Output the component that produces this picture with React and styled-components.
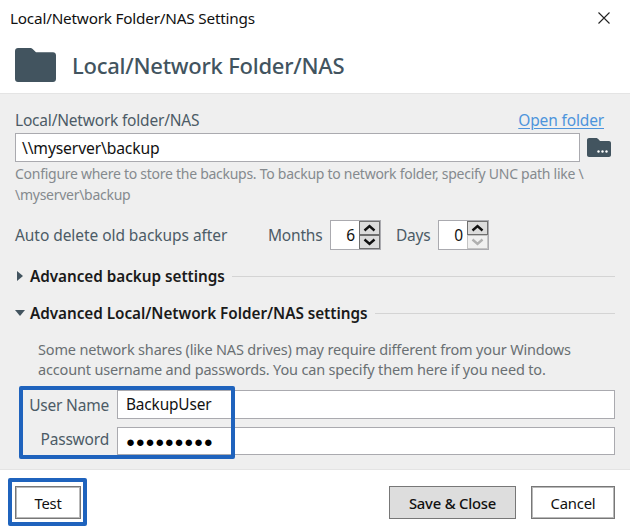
import React from "react";
import styled, { createGlobalStyle } from "styled-components";

const GlobalStyle = createGlobalStyle`
  html, body {
    margin: 0;
    padding: 0;
    background: #ffffff;
  }
  * {
    box-sizing: border-box;
  }
`;

const FONT = `"Noto Sans", "Open Sans", "Liberation Sans", sans-serif`;
const SLATE = "#42545f";
const HIGHLIGHT = "#1f63bd";

const Dialog = styled.div`
  width: 630px;
  height: 531px;
  display: flex;
  flex-direction: column;
  overflow: hidden;
  background: #ffffff;
  font-family: ${FONT};
  color: #111;
`;

const TitleBar = styled.div`
  height: 37px;
  padding: 0 20px 2px 10px;
  display: flex;
  align-items: center;
  justify-content: space-between;
  font-size: 15.3px;
  letter-spacing: -0.2px;
`;

const Header = styled.div`
  height: 57px;
  padding: 0 0 1px 15px;
  display: flex;
  align-items: center;
  gap: 16px;
  border-bottom: 1px solid #e4e4e4;
  color: ${SLATE};
  font-size: 22px;
  font-weight: 500;
  letter-spacing: -0.25px;
`;

const Body = styled.div`
  height: 376px;
  padding: 14px 15px 0;
  display: flex;
  flex-direction: column;
  background: #efefef;
  border-bottom: 1px solid #e4e4e4;
`;

const LabelRow = styled.div`
  height: 25px;
  padding: 0 11px 2px 0;
  display: flex;
  align-items: center;
  justify-content: space-between;
  font-size: 15.5px;
  color: #4c5b66;
  letter-spacing: -0.2px;
`;

const FolderLink = styled.a`
  color: #4d94dc;
  font-size: 15.5px;
  letter-spacing: -0.15px;
  text-decoration: underline;
  text-underline-offset: 2px;
`;

const PathRow = styled.div`
  padding-right: 4px;
  display: flex;
  align-items: center;
  gap: 7px;
`;

const TextBox = styled.div`
  height: ${(p) => p.$height || 29}px;
  flex: 1;
  padding: 0 8px;
  display: flex;
  align-items: center;
  background: #ffffff;
  border: 1px solid #aaaaaf;
  color: #111;
  font-size: 15.4px;
  letter-spacing: -0.15px;
  white-space: nowrap;
`;

const PathText = styled.span`
  margin-left: -2px;
  font-size: 15.7px;
`;

const Help = styled.p`
  margin: 1px 0 0;
  width: 600px;
  font-size: 14px;
  line-height: 21px;
  letter-spacing: -0.27px;
  color: #858a8e;
`;

const RetentionRow = styled.div`
  margin-top: 14px;
  height: 31px;
  display: flex;
  align-items: center;
  font-size: 15.5px;
  letter-spacing: -0.2px;
  color: #4c5b66;
`;

const RetentionLabel = styled.span`
  width: 253px;
  letter-spacing: -0.06px;
`;

const UnitLabel = styled.span`
  width: ${(p) => p.$width}px;
`;

const Spinner = styled.div`
  width: ${(p) => p.$width}px;
  height: 30px;
  margin-right: ${(p) => p.$gap}px;
  display: flex;
  border: 1px solid #aaaaaf;
  background: #ffffff;
`;

const SpinValue = styled.div`
  flex: 1;
  padding-right: 4px;
  display: flex;
  align-items: center;
  justify-content: flex-end;
  color: #111;
  font-size: 15.5px;
`;

const SpinButtons = styled.div`
  width: 21px;
  display: flex;
  flex-direction: column;
`;

const SpinButton = styled.div`
  flex: 1;
  display: flex;
  align-items: center;
  justify-content: center;
  background: ${(p) => (p.$disabled ? "#f0f0f0" : "#dcdcdc")};
  border: 1px solid ${(p) => (p.$disabled ? "#c4c4c4" : "#6f6f6f")};
  color: ${(p) => (p.$disabled ? "#b0b0b0" : "#111")};
`;

const SectionRow = styled.div`
  margin-top: ${(p) => p.$top}px;
  height: 24px;
  display: flex;
  align-items: center;
  gap: 5px;
  color: #1a1a1a;
  font-size: 15.3px;
  font-weight: 600;
  letter-spacing: -0.04px;
  white-space: nowrap;
`;

const Caret = styled.span`
  width: 10px;
  display: flex;
  justify-content: center;
  color: ${SLATE};
`;

const SectionRule = styled.span`
  flex: 1;
  height: 1px;
  margin-left: 2px;
  background: #d4d4d4;
`;

const Note = styled.p`
  margin: 14px 0 0 23px;
  font-size: 14.5px;
  line-height: 20px;
  letter-spacing: -0.17px;
  color: #6a6f73;
  white-space: nowrap;
`;

const Credentials = styled.div`
  position: relative;
  margin-top: 11px;
  display: grid;
  grid-template-columns: 102px 1fr;
  row-gap: 8px;
  align-items: center;
`;

const FieldLabel = styled.label`
  padding: 0 8px ${(p) => p.$lift || 0}px 0;
  text-align: right;
  font-size: 15.5px;
  letter-spacing: -0.2px;
  color: #4c5b66;
`;

const Dots = styled.span`
  font-family: "Liberation Sans", sans-serif;
  font-size: 15px;
  letter-spacing: 0.65px;
  color: #000;
`;

const Highlight = styled.div`
  position: absolute;
  left: ${(p) => p.$left}px;
  top: ${(p) => p.$top}px;
  width: ${(p) => p.$width}px;
  height: ${(p) => p.$height}px;
  border: 4px solid ${HIGHLIGHT};
  border-radius: 2px;
  pointer-events: none;
`;

const Footer = styled.div`
  flex: 1;
  padding: 16px 15px 0;
  display: flex;
  align-items: flex-start;
  gap: 15px;
`;

const TestWrap = styled.div`
  position: relative;
  margin-right: auto;
`;

const Button = styled.button`
  width: ${(p) => p.$width}px;
  height: 33px;
  padding: 0;
  background: ${(p) => (p.$primary ? "#dddddd" : "#ffffff")};
  border: 1px solid #777777;
  box-shadow: ${(p) => (p.$primary ? "none" : "inset 0 0 0 1px #b9b9b9")};
  color: #111;
  font-family: ${FONT};
  font-size: 14.8px;
  font-weight: ${(p) => (p.$primary ? 500 : 400)};
  letter-spacing: -0.2px;
`;

function FolderIcon({ size, height }) {
  return (
    <svg width={size} height={height} viewBox="0 0 41 34" fill={SLATE}>
      <path d="M3 0h12c1.500 0 2.400.6 3.400 1.700L21 4.300h17c1.700 0 3 1.300 3 3V31c0 1.700-1.300 3-3 3H3c-1.700 0-3-1.300-3-3V3c0-1.700 1.300-3 3-3z" />
    </svg>
  );
}

function BrowseIcon() {
  return (
    <svg width="24" height="19" viewBox="0 0 24 19">
      <path
        fill={SLATE}
        d="M2 0h7c1 0 1.600.4 2.200 1.100L13 3h9c1.100 0 2 .9 2 2v12c0 1.100-.9 2-2 2H2c-1.100 0-2-.9-2-2V2C0 .9.900 0 2 0z"
      />
      <g fill="#ffffff">
        <circle cx="11.500" cy="13.500" r="1.200" />
        <circle cx="15.500" cy="13.500" r="1.200" />
        <circle cx="19.500" cy="13.500" r="1.200" />
      </g>
    </svg>
  );
}

function Chevron({ down }) {
  return (
    <svg width="13" height="8" viewBox="0 0 13 8">
      <path
        d={down ? "M1.500 1.500l5 4.500 5-4.500" : "M1.500 6.500l5-4.500 5 4.500"}
        fill="none"
        stroke="currentColor"
        strokeWidth="2.400"
      />
    </svg>
  );
}

function NumberSpinner({ value, width, gap, downDisabled }) {
  return (
    <Spinner $width={width} $gap={gap}>
      <SpinValue>{value}</SpinValue>
      <SpinButtons>
        <SpinButton>
          <Chevron />
        </SpinButton>
        <SpinButton $disabled={downDisabled}>
          <Chevron down />
        </SpinButton>
      </SpinButtons>
    </Spinner>
  );
}

export default function App() {
  return (
    <>
      <GlobalStyle />
      <Dialog>
        <TitleBar>
          <span>Local/Network Folder/NAS Settings</span>
          <svg width="12" height="12" viewBox="0 0 12 12">
            <path d="M.5.500l11 11M11.500.500l-11 11" stroke="#222" strokeWidth="1.100" />
          </svg>
        </TitleBar>
        <Header>
          <FolderIcon size={41} height={34} />
          <span>Local/Network Folder/NAS</span>
        </Header>
        <Body>
          <LabelRow>
            <span>Local/Network folder/NAS</span>
            <FolderLink>Open folder</FolderLink>
          </LabelRow>
          <PathRow>
            <TextBox>
              <PathText>\\myserver\backup</PathText>
            </TextBox>
            <BrowseIcon />
          </PathRow>
          <Help>
            Configure where to store the backups. To backup to network folder, specify UNC path like \
            <br />
            \myserver\backup
          </Help>
          <RetentionRow>
            <RetentionLabel>Auto delete old backups after</RetentionLabel>
            <UnitLabel $width={62}>Months</UnitLabel>
            <NumberSpinner value="6" width={51} gap={15} />
            <UnitLabel $width={42}>Days</UnitLabel>
            <NumberSpinner value="0" width={51} gap={0} downDisabled />
          </RetentionRow>
          <SectionRow $top={14}>
            <Caret>
              <svg width="6" height="10" viewBox="0 0 6 10" fill="currentColor">
                <path d="M0 0l6 5-6 5z" />
              </svg>
            </Caret>
            <span>Advanced backup settings</span>
            <SectionRule />
          </SectionRow>
          <SectionRow $top={13}>
            <Caret>
              <svg width="10" height="6" viewBox="0 0 10 6" fill="currentColor">
                <path d="M0 0h10L5 6z" />
              </svg>
            </Caret>
            <span>Advanced Local/Network Folder/NAS settings</span>
            <SectionRule />
          </SectionRow>
          <Note>
            Some network shares (like NAS drives) may require different from your Windows
            <br />
            account username and passwords. You can specify them here if you need to.
          </Note>
          <Credentials>
            <FieldLabel>User Name</FieldLabel>
            <TextBox>BackupUser</TextBox>
            <FieldLabel $lift={4}>Password</FieldLabel>
            <TextBox $height={28}>
              <Dots>●●●●●●●●●</Dots>
            </TextBox>
            <Highlight $left={4} $top={-4} $width={216} $height={73} />
          </Credentials>
        </Body>
        <Footer>
          <TestWrap>
            <Button $width={66}>Test</Button>
            <Highlight $left={-7} $top={-8} $width={79} $height={48} />
          </TestWrap>
          <Button $primary $width={127}>
            Save &amp; Close
          </Button>
          <Button $width={84}>Cancel</Button>
        </Footer>
      </Dialog>
    </>
  );
}
